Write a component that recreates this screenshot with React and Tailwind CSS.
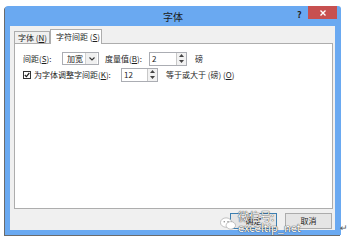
import React from "react";

const font = { fontFamily: '"Noto Sans CJK SC", "Liberation Sans", sans-serif' };

const Spinner = () => (
    <div className="flex flex-col w-[10px] h-[12px] border-l border-[#c8c8c8] bg-[#f2f2f2]">
        <div className="flex-1 flex items-center justify-center">
            <svg width="5" height="3" viewBox="0 0 5 3"><path d="M0 3 L2.5 0 L5 3Z" fill="#444" /></svg>
        </div>
        <div className="flex-1 flex items-center justify-center">
            <svg width="5" height="3" viewBox="0 0 5 3"><path d="M0 0 L2.5 3 L5 0Z" fill="#444" /></svg>
        </div>
    </div>
);

const NumberBox = ({value, width}) => (
    <div className={`flex items-center h-[14px] border border-[#abadb3] bg-white ${width}`}>
        <span className="flex-1 pl-[2px] text-[8px] leading-none">{value}</span>
        <Spinner />
    </div>
);

export default function App() {
    return (
        <div className="relative w-[349px] h-[240px] bg-white overflow-hidden text-[#1e1e1e]" style={font}>
            <div className="ml-[5px] mt-[6px] w-[336px] h-[229px] flex flex-col bg-[#6aa9f1] rounded-t-[3px] shadow-[-1px_1px_0_#6b6b6b]">
                <div className="relative h-[20px] flex items-center justify-center shrink-0">
                    <span className="text-[10px] leading-none text-[#1a1a1a] pt-[1px]">字体</span>
                    <span className="absolute left-[292px] top-[4px] text-[9px] font-bold leading-none text-[#222]">?</span>
                    <div className="absolute left-[303px] top-0 w-[29px] h-[13px] bg-[#c75050] flex items-center justify-center">
                        <svg width="6" height="6" viewBox="0 0 6 6"><path d="M0.5 0.5 L5.5 5.5 M5.5 0.5 L0.5 5.5" stroke="#fff" strokeWidth="1.4" /></svg>
                    </div>
                </div>
                <div className="flex-1 mx-[5px] mr-[6px] mb-[5px] bg-[#f0f0f0] flex flex-col px-[4px] pr-[2px]">
                    <div className="flex items-end h-[17px] shrink-0">
                        <div className="h-[12px] w-[36px] border border-b-0 border-[#adadad] bg-[#f0f0f0] flex items-center pl-[3px] text-[8px] leading-none">字体 (<u>N</u>)</div>
                        <div className="relative h-[15px] w-[52px] border border-b-0 border-[#adadad] bg-white flex items-center pl-[5px] text-[8px] leading-none -mb-px z-10">字符间距 (<u>S</u>)</div>
                    </div>
                    <div className="h-[166px] border border-[#adadad] bg-white px-[8px] pt-[8px] text-[8px] leading-none">
                        <div className="flex items-center h-[13px]">
                            <span className="w-[39px]">间距(<u>S</u>):</span>
                            <div className="flex items-center h-[13px] w-[37px] border border-[#abadb3] bg-white">
                                <span className="flex-1 pl-[4px]">加宽</span>
                                <div className="w-[12px] h-[11px] mr-[1px] flex items-center justify-center bg-[#f0f0f0] border-l border-[#d0d0d0]">
                                    <svg width="6" height="4" viewBox="0 0 6 4"><path d="M0.5 0.5 L3 3 L5.5 0.5" stroke="#333" strokeWidth="1.1" fill="none" /></svg>
                                </div>
                            </div>
                            <span className="ml-[6px] w-[44px]">度量值(<u>B</u>):</span>
                            <NumberBox value="2" width="w-[38px]" />
                            <span className="ml-[8px]">磅</span>
                        </div>
                        <div className="flex items-center h-[13px] mt-[3px]">
                            <div className="w-[8px] h-[8px] border border-[#333] flex items-center justify-center">
                                <svg width="6" height="6" viewBox="0 0 6 6"><path d="M0.8 3 L2.4 4.6 L5.3 1" stroke="#222" strokeWidth="1.2" fill="none" /></svg>
                            </div>
                            <span className="ml-[3px] w-[87px]">为字体调整字间距(<u>K</u>):</span>
                            <NumberBox value="12" width="w-[37px]" />
                            <span className="ml-[8px]">等于或大于 (磅) (<u>O</u>)</span>
                        </div>
                    </div>
                    <div className="relative flex justify-end gap-[8px] mt-[4px] pr-[1px]">
                        <div className="w-[47px] h-[16px] border border-[#3c7fb1] bg-[#e5e5e5] flex items-center justify-center text-[8px] leading-none">确定</div>
                        <div className="w-[47px] h-[16px] border border-[#acacac] bg-[#e5e5e5] flex items-center justify-center text-[8px] leading-none">取消</div>
                        <div className="absolute left-[206px] top-0 flex items-center gap-[2px]">
                            <svg width="17" height="13" viewBox="0 0 17 13">
                                <ellipse cx="6.5" cy="5.5" rx="6" ry="5" fill="#fff" stroke="#999" strokeWidth="0.6" />
                                <ellipse cx="11.5" cy="8.5" rx="5" ry="4" fill="#fff" stroke="#999" strokeWidth="0.6" />
                                <circle cx="4.5" cy="4.5" r="0.8" fill="#888" />
                                <circle cx="8.5" cy="4.5" r="0.8" fill="#888" />
                            </svg>
                            <span className="text-[11px] leading-none text-white -mt-[2px]" style={{fontFamily: '"Noto Sans CJK SC", "DejaVu Sans", sans-serif', textShadow: "0 0 1px #333, 0 0 1px #333"}}>微信号: exceltip_net</span>
                        </div>
                    </div>
                </div>
            </div>
            <span className="absolute left-[340px] top-[223px] text-[9px] leading-none text-[#555]">↵</span>
        </div>
    );
}
